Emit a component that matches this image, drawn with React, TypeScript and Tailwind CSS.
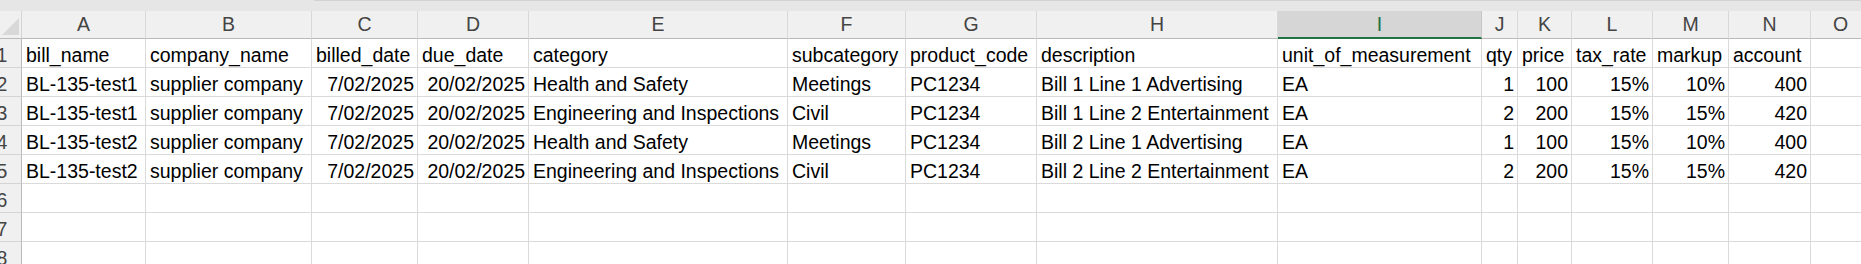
import React from 'react';

const columns = [
    { key: 'A', width: 124 },
    { key: 'B', width: 166 },
    { key: 'C', width: 106 },
    { key: 'D', width: 111 },
    { key: 'E', width: 259 },
    { key: 'F', width: 118 },
    { key: 'G', width: 131 },
    { key: 'H', width: 241 },
    { key: 'I', width: 204 },
    { key: 'J', width: 36 },
    { key: 'K', width: 54 },
    { key: 'L', width: 81 },
    { key: 'M', width: 76 },
    { key: 'N', width: 82 },
    { key: 'O', width: 60 },
];

// right-aligned columns (dates + numbers)
const rightCols = new Set([2, 3, 9, 10, 11, 12, 13]);

const header = ['bill_name', 'company_name', 'billed_date', 'due_date', 'category', 'subcategory', 'product_code', 'description', 'unit_of_measurement', 'qty', 'price', 'tax_rate', 'markup', 'account', ''];

const rows = [
    ['BL-135-test1', 'supplier company', '7/02/2025', '20/02/2025', 'Health and Safety', 'Meetings', 'PC1234', 'Bill 1 Line 1 Advertising', 'EA', '1', '100', '15%', '10%', '400', ''],
    ['BL-135-test1', 'supplier company', '7/02/2025', '20/02/2025', 'Engineering and Inspections', 'Civil', 'PC1234', 'Bill 1 Line 2 Entertainment', 'EA', '2', '200', '15%', '15%', '420', ''],
    ['BL-135-test2', 'supplier company', '7/02/2025', '20/02/2025', 'Health and Safety', 'Meetings', 'PC1234', 'Bill 2 Line 1 Advertising', 'EA', '1', '100', '15%', '10%', '400', ''],
    ['BL-135-test2', 'supplier company', '7/02/2025', '20/02/2025', 'Engineering and Inspections', 'Civil', 'PC1234', 'Bill 2 Line 2 Entertainment', 'EA', '2', '200', '15%', '15%', '420', ''],
];

const empty = Array(15).fill('');

function RowNum({ n }: { n: number }) {
    return (
        <div className="flex w-[22px] h-[29px] shrink-0 items-end overflow-hidden border-r border-b border-r-[#bababa] border-b-[#d4d4d4] bg-[#f0f0f0]">
            <span className="-ml-[11px] w-[26px] shrink-0 text-center text-[19.5px] leading-[24px] text-[#444]">{n}</span>
        </div>
    );
}

function Cell({ text, width, right, header }: { text: string; width: number; right: boolean; header?: boolean }) {
    return (
        <div
            style={{ width }}
            className={`flex h-[29px] shrink-0 items-end overflow-visible whitespace-nowrap border-r border-b border-[#dadada] bg-white pl-[4px] pr-[3px] ${right ? 'justify-end' : 'justify-start'}`}
        >
            <span className={`text-[19.5px] leading-[24px] text-black ${header ? '' : ''}`}>{text}</span>
        </div>
    );
}

export default function App() {
    return (
        <div className="w-[1861px] h-[264px] overflow-hidden bg-white" style={{ fontFamily: '"Liberation Sans", Arial, sans-serif' }}>
            {/* top strip */}
            <div className="flex h-[11px] bg-[#e6e6e6]">
                <div className="w-[314px] shrink-0" />
                <div className="flex-1 border-t border-[#d2d2d2]" />
            </div>

            {/* column letters */}
            <div className="flex h-[28px]">
                <div className="relative w-[22px] h-[28px] shrink-0 border-r border-b border-r-[#d4d4d4] border-b-[#bababa] bg-[#f0f0f0]">
                    <svg className="absolute right-[2px] bottom-[3px]" width="17" height="17" viewBox="0 0 17 17">
                        <polygon points="17,0 17,17 0,17" fill="#d8d8d8" />
                    </svg>
                </div>
                {columns.map((c) =>
                    c.key === 'I' ? (
                        <div
                            key={c.key}
                            style={{ width: c.width }}
                            className="flex h-[28px] shrink-0 items-end justify-center border-r border-r-[#c8c8c8] border-b-2 border-b-[#217346] bg-[#d6d6d6] pb-[1px]"
                        >
                            <span className="text-[19.5px] leading-[24px] text-[#1e7145]">{c.key}</span>
                        </div>
                    ) : (
                        <div
                            key={c.key}
                            style={{ width: c.width }}
                            className="flex h-[28px] shrink-0 items-end justify-center border-r border-b border-r-[#d9d9d9] border-b-[#bababa] bg-[#f0f0f0] pb-[2px]"
                        >
                            <span className="text-[19.5px] leading-[24px] text-[#444]">{c.key}</span>
                        </div>
                    )
                )}
            </div>

            {[header, ...rows, empty, empty, empty].map((r, i) => (
                <div key={i} className="flex">
                    <RowNum n={i + 1} />
                    {columns.map((c, j) => (
                        <Cell key={c.key} text={r[j]} width={c.width} right={i > 0 && rightCols.has(j)} />
                    ))}
                </div>
            ))}
        </div>
    );
}
